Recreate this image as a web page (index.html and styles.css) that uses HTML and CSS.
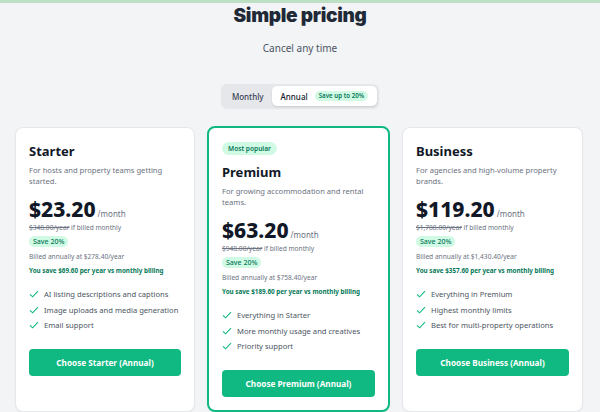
FILE: index.html
```html
<!DOCTYPE html>
<html lang="en">
<head>
    <meta charset="UTF-8">
    <meta name="viewport" content="width=device-width, initial-scale=1.0">
    <title>Simple pricing</title>
    <link rel="stylesheet" href="styles.css">
</head>
<body>
    <div class="topbar"></div>

    <header class="hero">
        <h1 class="hero-title">Simple pricing</h1>
        <p class="hero-sub">Cancel any time</p>

        <div class="billing-toggle">
            <button class="toggle-option">Monthly</button>
            <button class="toggle-option active">Annual <span class="badge">Save up to 20%</span></button>
        </div>
    </header>

    <main class="plans">
        <!-- Starter -->
        <div class="plan">
            <h2 class="plan-name">Starter</h2>
            <p class="plan-desc">For hosts and property teams getting started.</p>
            <div class="price-row">
                <span class="price">$23.20</span>
                <span class="per">/month</span>
            </div>
            <p class="was"><s>$348.00/year</s> if billed monthly</p>
            <span class="save-pill">Save 20%</span>
            <p class="billed">Billed annually at $278.40/year</p>
            <p class="you-save">You save $69.60 per year vs monthly billing</p>
            <ul class="features">
                <li><svg class="tick" viewBox="0 0 12 10"><polyline points="1,5.5 4.3,8.5 11,1.5"/></svg>AI listing descriptions and captions</li>
                <li><svg class="tick" viewBox="0 0 12 10"><polyline points="1,5.5 4.3,8.5 11,1.5"/></svg>Image uploads and media generation</li>
                <li><svg class="tick" viewBox="0 0 12 10"><polyline points="1,5.5 4.3,8.5 11,1.5"/></svg>Email support</li>
            </ul>
            <button class="btn-choose">Choose Starter (Annual)</button>
        </div>

        <!-- Premium -->
        <div class="plan plan-popular">
            <span class="popular-pill">Most popular</span>
            <h2 class="plan-name">Premium</h2>
            <p class="plan-desc">For growing accommodation and rental teams.</p>
            <div class="price-row">
                <span class="price">$63.20</span>
                <span class="per">/month</span>
            </div>
            <p class="was"><s>$948.00/year</s> if billed monthly</p>
            <span class="save-pill">Save 20%</span>
            <p class="billed">Billed annually at $758.40/year</p>
            <p class="you-save">You save $189.60 per year vs monthly billing</p>
            <ul class="features">
                <li><svg class="tick" viewBox="0 0 12 10"><polyline points="1,5.5 4.3,8.5 11,1.5"/></svg>Everything in Starter</li>
                <li><svg class="tick" viewBox="0 0 12 10"><polyline points="1,5.5 4.3,8.5 11,1.5"/></svg>More monthly usage and creatives</li>
                <li><svg class="tick" viewBox="0 0 12 10"><polyline points="1,5.5 4.3,8.5 11,1.5"/></svg>Priority support</li>
            </ul>
            <button class="btn-choose">Choose Premium (Annual)</button>
        </div>

        <!-- Business -->
        <div class="plan">
            <h2 class="plan-name">Business</h2>
            <p class="plan-desc">For agencies and high-volume property brands.</p>
            <div class="price-row">
                <span class="price">$119.20</span>
                <span class="per">/month</span>
            </div>
            <p class="was"><s>$1,788.00/year</s> if billed monthly</p>
            <span class="save-pill">Save 20%</span>
            <p class="billed">Billed annually at $1,430.40/year</p>
            <p class="you-save">You save $357.60 per year vs monthly billing</p>
            <ul class="features">
                <li><svg class="tick" viewBox="0 0 12 10"><polyline points="1,5.5 4.3,8.5 11,1.5"/></svg>Everything in Premium</li>
                <li><svg class="tick" viewBox="0 0 12 10"><polyline points="1,5.5 4.3,8.5 11,1.5"/></svg>Highest monthly limits</li>
                <li><svg class="tick" viewBox="0 0 12 10"><polyline points="1,5.5 4.3,8.5 11,1.5"/></svg>Best for multi-property operations</li>
            </ul>
            <button class="btn-choose">Choose Business (Annual)</button>
        </div>
    </main>
</body>
</html>
```

FILE: styles.css
```css
body {
    margin: 0;
    background-color: #f3f4f6;
    font-family: "Noto Sans", "Open Sans", sans-serif;
    color: #111827;
}
.topbar {
    height: 3px;
    background-color: #bde0c5;
}
.hero {
    display: flex;
    flex-direction: column;
    align-items: center;
}
.hero-title {
    margin: 0;
    font-family: Inter, "Noto Sans", sans-serif;
    font-size: 19px;
    line-height: 26px;
    font-weight: 900;
    letter-spacing: -0.3px;
    color: #1f2937;
}
.hero-sub {
    margin: 12px 0 0;
    font-size: 10px;
    line-height: 14px;
    color: #4b5563;
}
.billing-toggle {
    display: flex;
    margin-top: 29px;
    padding: 2px;
    background-color: #e5e7eb;
    border-radius: 6px;
    box-shadow: 0 1px 2px rgba(0, 0, 0, 0.06);
}
.toggle-option {
    display: flex;
    align-items: center;
    height: 20px;
    padding: 0 8px 0 9px;
    border: none;
    border-radius: 5px;
    background: none;
    font-family: inherit;
    font-size: 8px;
    font-weight: 500;
    color: #374151;
}
.toggle-option.active {
    background-color: white;
    color: #111827;
    box-shadow: 0 1px 2px rgba(0, 0, 0, 0.12);
    padding-right: 9px;
}
.badge {
    margin-left: 7px;
    padding: 0 4px;
    height: 10px;
    line-height: 10px;
    border-radius: 6px;
    background-color: #d1fae5;
    color: #047857;
    font-size: 6.2px;
    font-weight: 600;
}
.plans {
    display: grid;
    grid-template-columns: 180px 183px 181px;
    gap: 12px;
    margin: 19px 0 0 15px;
}
.plan {
    display: flex;
    flex-direction: column;
    align-items: flex-start;
    background-color: white;
    border: 1px solid #e5e7eb;
    border-radius: 8px;
    padding: 14px 13px;
    box-shadow: 0 1px 2px rgba(0, 0, 0, 0.04);
}
.plan-popular {
    border: 2px solid #10b981;
    margin-top: -1px;
    padding-bottom: 13px;
}
.popular-pill {
    height: 13px;
    line-height: 13px;
    padding: 0 6px;
    margin-bottom: 8px;
    border-radius: 7px;
    background-color: #d1fae5;
    color: #047857;
    font-size: 6.6px;
    font-weight: 600;
}
.plan-name {
    margin: 0;
    font-size: 13px;
    line-height: 18px;
    font-weight: 700;
    color: #111827;
}
.plan-desc {
    margin: 5px 0 0;
    font-size: 7.6px;
    line-height: 10.6px;
    color: #6b7280;
}
.price-row {
    display: flex;
    align-items: baseline;
    gap: 2px;
    height: 23px;
    margin-top: 12px;
    font-size: 21px;
    line-height: 23px;
}
.price {
    font-weight: 800;
    color: #111827;
}
.per {
    font-size: 8px;
    line-height: 1;
    color: #6b7280;
}
.was {
    margin: 2px 0 0;
    font-size: 6.6px;
    line-height: 10.5px;
    color: #6b7280;
}
.save-pill {
    margin-top: 2.5px;
    height: 11px;
    line-height: 11px;
    padding: 0 4px;
    border-radius: 6px;
    background-color: #d1fae5;
    color: #047857;
    font-size: 7px;
    font-weight: 500;
}
.billed {
    margin: 5px 0 0;
    font-size: 6.6px;
    line-height: 9px;
    color: #6b7280;
}
.you-save {
    margin: 4.5px 0 0;
    font-size: 6.3px;
    line-height: 9px;
    font-weight: 700;
    color: #047857;
}
.features {
    list-style: none;
    margin: 11.5px 0 0;
    padding: 0;
}
.features li {
    display: flex;
    align-items: center;
    height: 15.7px;
    font-size: 7.6px;
    color: #4b5563;
}
.tick {
    width: 10px;
    height: 8px;
    margin-right: 5px;
    fill: none;
    stroke: #10b981;
    stroke-width: 1.4;
}
.btn-choose {
    width: 100%;
    height: 27px;
    margin-top: 15.5px;
    border: none;
    border-radius: 4px;
    background-color: #10b981;
    color: white;
    font-family: inherit;
    font-size: 8.2px;
    font-weight: 700;
    cursor: pointer;
}
.btn-choose:hover {
    background-color: #059669;
}
```
